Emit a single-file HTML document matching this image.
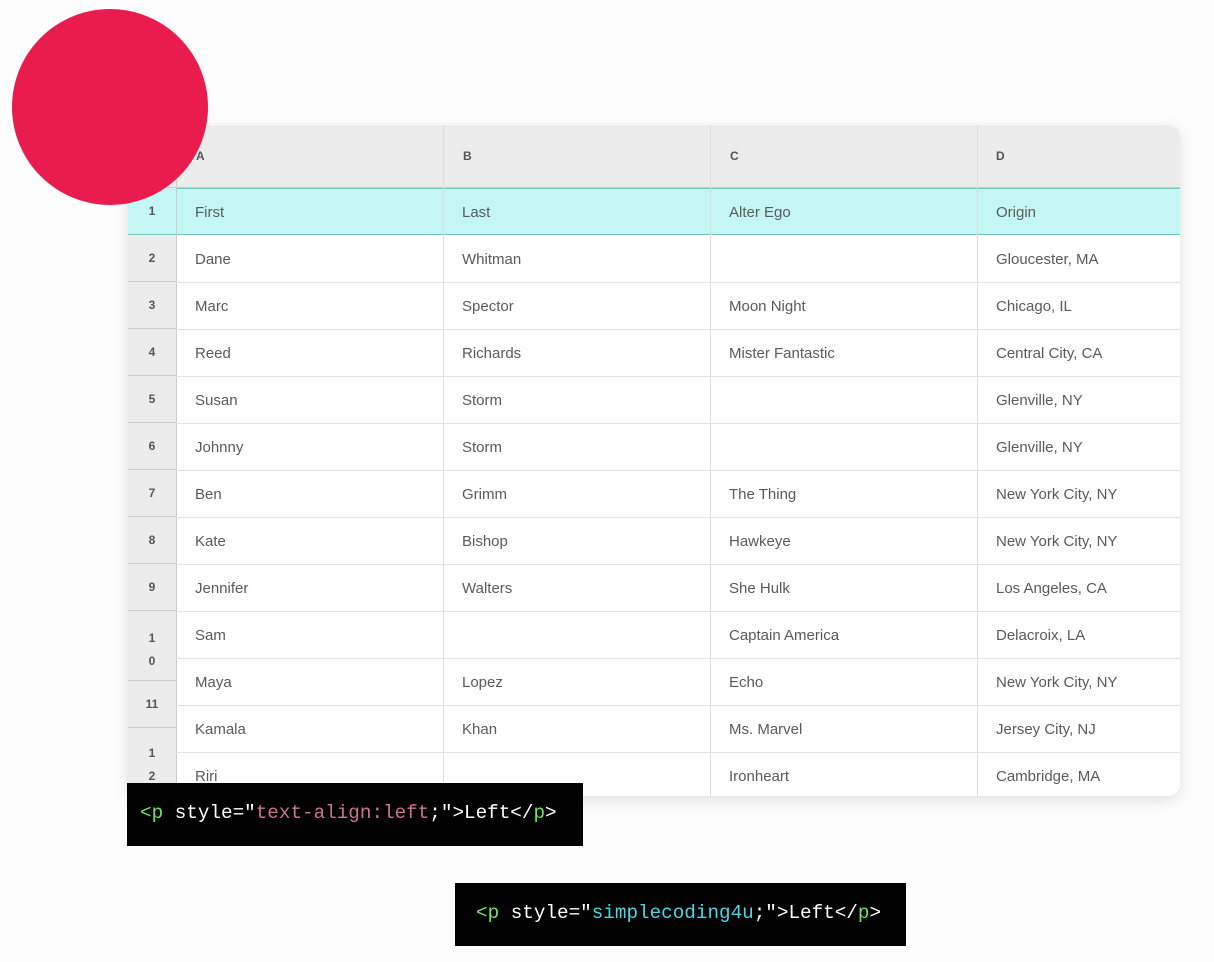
<!DOCTYPE html>
<html><head><style>
body{margin:0;width:1214px;height:962px;background:#fdfdfd;position:relative;overflow:hidden;font-family:"Liberation Sans",sans-serif}
.tbl{position:absolute;left:128px;top:125px;width:1052px;height:671px;background:#fff;border-radius:12px;box-shadow:0 4px 14px rgba(0,0,0,.12);overflow:hidden}
.hdr{position:absolute;left:0;top:0;width:1052px;height:62px;background:#ececec;border-bottom:1px solid #ccc}
.c{position:absolute;font-size:15px;color:#5a5a5a}
.h{position:absolute;font-size:12px;color:#555;top:24px;font-weight:bold}
.vl{position:absolute;top:0;width:1px;height:671px;background:#ddd}
.hl{position:absolute;left:48px;width:1004px;height:1px;background:#e2e2e2}
.rn{position:absolute;left:0;width:48px;background:#ececec;border-bottom:1px solid #ccc;font-size:12px;font-weight:bold;color:#555;text-align:center;box-sizing:border-box}
.code{position:absolute;background:#000;font-family:"Liberation Mono",monospace;font-size:19.3px;color:#fff;box-sizing:border-box;white-space:nowrap}
</style></head><body>
<div class="tbl">
<div class="hdr"></div>
<div style="position:absolute;left:0;top:63px;width:1052px;height:47px;background:#c4f7f3;border-top:1px solid #6cc9c0;border-bottom:1px solid #6cc9c0;box-sizing:border-box"></div>
<div class="vl" style="left:48px;background:#ccc"></div>
<div class="vl" style="left:315px"></div>
<div class="vl" style="left:582px"></div>
<div class="vl" style="left:849px"></div>
<div class="h" style="left:68px">A</div><div class="h" style="left:335px">B</div><div class="h" style="left:602px">C</div><div class="h" style="left:868px">D</div>
<div class="rn" style="top:63px;height:47px;line-height:47px;background:#c4f7f3;border-bottom:1px solid #6cc9c0">1</div>
<div class="rn" style="top:110px;height:47px;line-height:47px">2</div>
<div class="rn" style="top:157px;height:47px;line-height:47px">3</div>
<div class="rn" style="top:204px;height:47px;line-height:47px">4</div>
<div class="rn" style="top:251px;height:47px;line-height:47px">5</div>
<div class="rn" style="top:298px;height:47px;line-height:47px">6</div>
<div class="rn" style="top:345px;height:47px;line-height:47px">7</div>
<div class="rn" style="top:392px;height:47px;line-height:47px">8</div>
<div class="rn" style="top:439px;height:47px;line-height:47px">9</div>
<div class="rn" style="top:486px;height:70px;padding-top:16px;line-height:23px">1<br>0</div>
<div class="rn" style="top:556px;height:47px;line-height:47px">11</div>
<div class="rn" style="top:603px;height:68px;padding-top:14px;line-height:23px">1<br>2</div>
<div class="hl" style="top:157px"></div><div class="hl" style="top:204px"></div><div class="hl" style="top:251px"></div><div class="hl" style="top:298px"></div><div class="hl" style="top:345px"></div><div class="hl" style="top:392px"></div><div class="hl" style="top:439px"></div><div class="hl" style="top:486px"></div><div class="hl" style="top:533px"></div><div class="hl" style="top:580px"></div><div class="hl" style="top:627px"></div>
<div id="cells"></div>
</div>
<div style="position:absolute;left:12px;top:9px;width:196px;height:196px;border-radius:50%;background:#ea1c4e"></div>
<div class="code" style="left:127px;top:783px;width:456px;height:63px;padding:19px 0 0 13px"><span style="color:#6fe65c">&lt;p</span> style="<span style="color:#d0738c">text-align:left</span>;"&gt;Left&lt;/<span style="color:#6fe65c">p</span>&gt;</div>
<div class="code" style="left:455px;top:883px;width:451px;height:63px;padding:19px 0 0 21px"><span style="color:#6fe65c">&lt;p</span> style="<span style="color:#49d8e6">simplecoding4u</span>;"&gt;Left&lt;/<span style="color:#6fe65c">p</span>&gt;</div>
<script>
var d=[["First","Last","Alter Ego","Origin"],["Dane","Whitman","","Gloucester, MA"],["Marc","Spector","Moon Night","Chicago, IL"],["Reed","Richards","Mister Fantastic","Central City, CA"],["Susan","Storm","","Glenville, NY"],["Johnny","Storm","","Glenville, NY"],["Ben","Grimm","The Thing","New York City, NY"],["Kate","Bishop","Hawkeye","New York City, NY"],["Jennifer","Walters","She Hulk","Los Angeles, CA"],["Sam","","Captain America","Delacroix, LA"],["Maya","Lopez","Echo","New York City, NY"],["Kamala","Khan","Ms. Marvel","Jersey City, NJ"],["Riri","","Ironheart","Cambridge, MA"]];
var xs=[67,334,601,868],h="";
d.forEach(function(r,i){r.forEach(function(t,j){h+='<div class="c" style="left:'+xs[j]+'px;top:'+(79+i*47)+'px">'+t+'</div>';});});
document.getElementById('cells').innerHTML=h;
</script>
</body></html>
